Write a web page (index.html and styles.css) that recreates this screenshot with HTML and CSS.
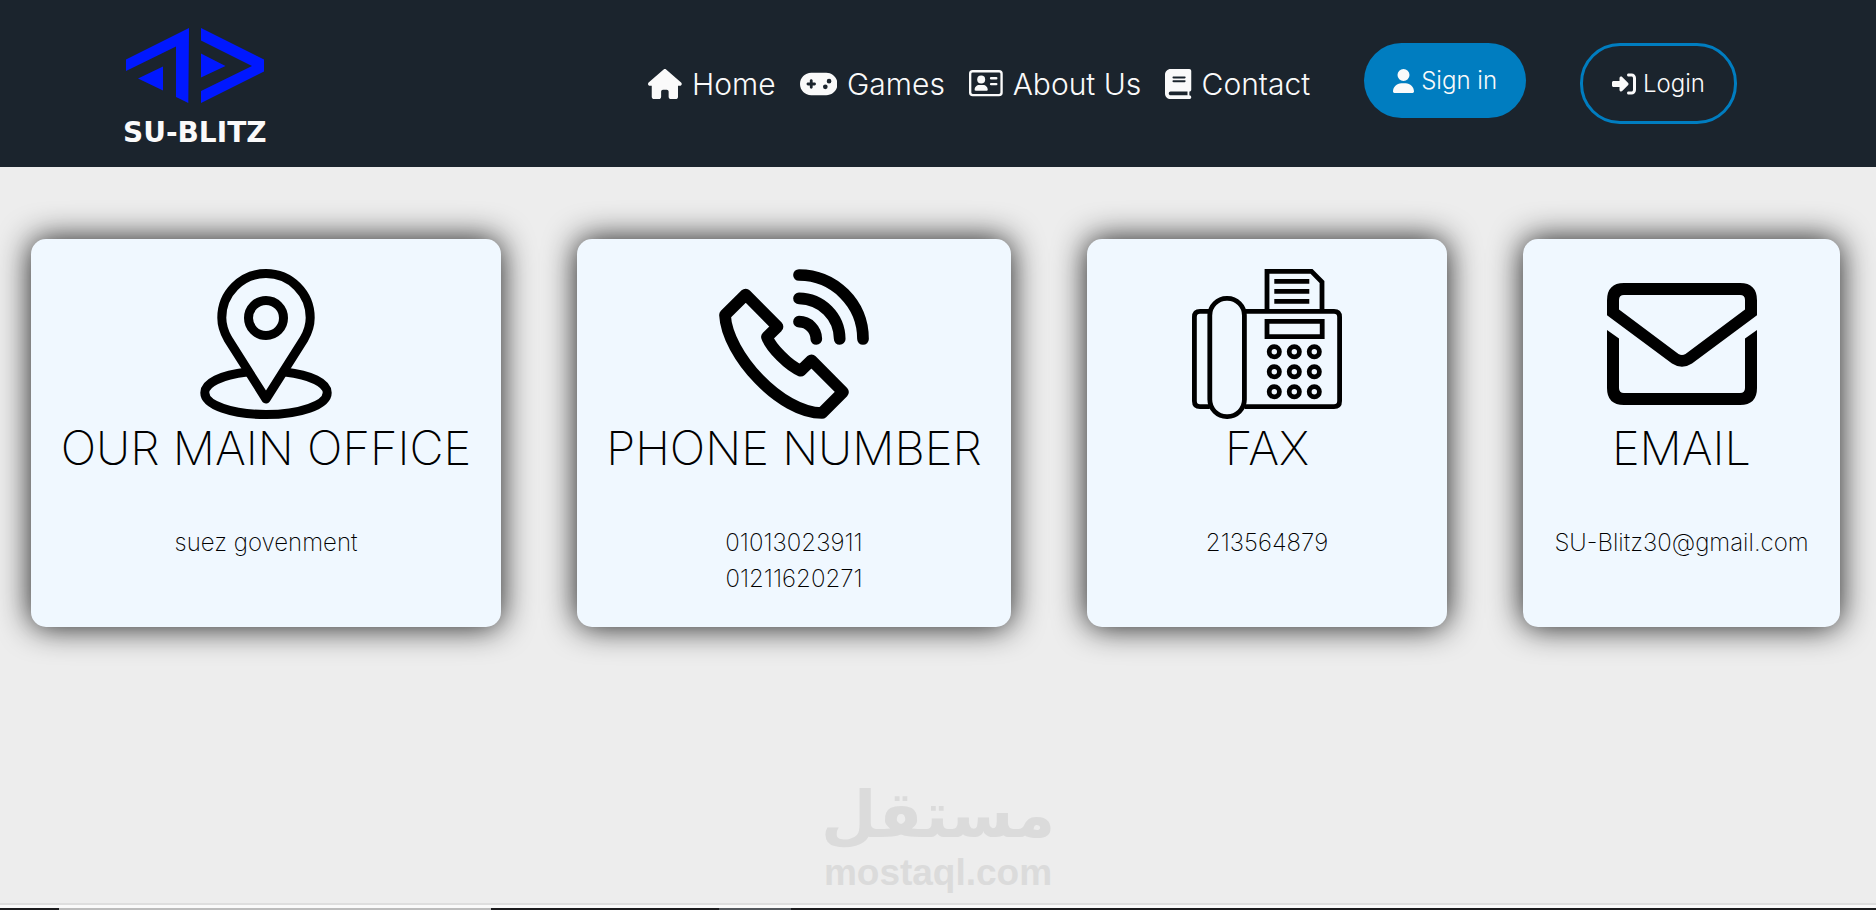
FILE: index.html
```
<!DOCTYPE html>
<html lang="en">
<head>
<meta charset="utf-8">
<meta name="viewport" content="width=device-width, initial-scale=1">
<title>SU-BLITZ | Contact</title>
<link rel="stylesheet" href="styles.css">
</head>
<body class="page">
<header class="header">
  <a class="logo" href="#">
    <svg class="logo-mark" viewBox="0 0 138 75" aria-hidden="true">
      <path d="M0 31.5 63 0 62.3 75 50 69V18.5L0 43zM12 50.5 37 38.5V62.5zM75 0 138 31.5V43.5L75 75V63L126 38 75 12.5zM75 25.5 99.5 38 75 49.5z"/>
    </svg>
    <span class="logo-text">SU-BLITZ</span>
  </a>
  <nav class="nav">
    <a class="nav-link" href="#">
      <svg class="nav-icon" viewBox="0 0 576 512" aria-hidden="true"><path d="M575.8 255.5c0 18-15 32.1-32 32.1h-32l.5 184.4c0 22.1-17.9 40-40 40H392c-22.1 0-40-17.9-40-40V384c0-17.7-14.3-32-32-32H256c-17.7 0-32 14.3-32 32v88c0 22.1-17.9 40-40 40H104c-22.1 0-40-17.9-40-40V287.6H32c-18 0-32-14-32-32.1 0-9 3-17 10-24L266.4 8c7-7 15-8 22-8s15 2 21 7L564.8 231.5c8 7 12 15 11 24z"/></svg>
      <span>Home</span>
    </a>
    <a class="nav-link" href="#">
      <svg class="nav-icon" viewBox="0 0 640 512" aria-hidden="true"><path fill-rule="evenodd" d="M192 64C86 64 0 150 0 256S86 448 192 448H448c106 0 192-86 192-192s-86-192-192-192H192zM496 168a40 40 0 1 1 0 80 40 40 0 1 1 0-80zM392 304a40 40 0 1 1 80 0 40 40 0 1 1 -80 0zM168 200c0-13.3 10.7-24 24-24s24 10.7 24 24v32h32c13.3 0 24 10.7 24 24s-10.7 24-24 24H216v32c0 13.3-10.7 24-24 24s-24-10.7-24-24V280H136c-13.3 0-24-10.7-24-24s10.7-24 24-24h32V200z"/></svg>
      <span>Games</span>
    </a>
    <a class="nav-link" href="#">
      <svg class="nav-icon" viewBox="0 0 576 512" aria-hidden="true"><rect x="20" y="38" width="536" height="408" rx="44" fill="none" stroke="currentColor" stroke-width="40"/><circle cx="208" cy="180" r="68"/><path d="M176 274h64c44 0 80 36 80 80 0 9-7 16-16 16H112c-9 0-16-7-16-16 0-44 36-80 80-80zM376 138h90q20 0 20 20t-20 20h-90q-20 0-20-20t20-20zM376 238h90q20 0 20 20t-20 20h-90q-20 0-20-20t20-20z"/></svg>
      <span>About Us</span>
    </a>
    <a class="nav-link" href="#">
      <svg class="nav-icon" viewBox="0 0 448 512" aria-hidden="true"><path fill-rule="evenodd" d="M96 0C43 0 0 43 0 96V416c0 53 43 96 96 96H416c17.7 0 32-14.3 32-32s-14.3-32-32-32V384c17.7 0 32-14.3 32-32V32c0-17.7-14.3-32-32-32H96zm0 384H384v64H96c-17.7 0-32-14.3-32-32s14.3-32 32-32zm32-240c0-8.8 7.2-16 16-16H336c8.8 0 16 7.2 16 16s-7.2 16-16 16H144c-8.8 0-16-7.2-16-16zm16 48H336c8.8 0 16 7.2 16 16s-7.2 16-16 16H144c-8.8 0-16-7.2-16-16s7.2-16 16-16z"/></svg>
      <span>Contact</span>
    </a>
  </nav>
  <div class="actions">
    <button class="btn btn-filled" type="button">
      <svg class="btn-icon" viewBox="0 0 448 512" aria-hidden="true"><path d="M224 256A128 128 0 1 0 224 0a128 128 0 1 0 0 256zm-45.7 48C79.8 304 0 383.8 0 482.3C0 498.7 13.3 512 29.7 512H418.3c16.4 0 29.7-13.3 29.7-29.7C448 383.8 368.2 304 269.7 304H178.3z"/></svg>
      <span>Sign in</span>
    </button>
    <button class="btn btn-outline" type="button">
      <svg class="btn-icon" viewBox="0 0 512 512" aria-hidden="true"><path d="M217.9 105.9L340.7 228.7c7.2 7.2 11.3 17.1 11.3 27.3s-4.1 20.1-11.3 27.3L217.9 406.1c-6.4 6.4-15 9.9-24 9.9c-18.7 0-33.9-15.2-33.9-33.9V320H32c-17.7 0-32-14.3-32-32V224c0-17.7 14.3-32 32-32H160V129.9c0-18.7 15.2-33.9 33.9-33.9c9 0 17.6 3.6 24 9.9zM352 416h64c17.7 0 32-14.3 32-32V128c0-17.7-14.3-32-32-32H352c-17.7 0-32-14.3-32-32s14.3-32 32-32h64c53 0 96 43 96 96V384c0 53-43 96-96 96H352c-17.7 0-32-14.3-32-32s14.3-32 32-32z"/></svg>
      <span>Login</span>
    </button>
  </div>
</header>

<main class="cards">
  <section class="card">
    <svg class="card-icon" viewBox="0 0 150 150" aria-hidden="true">
      <g fill="none" stroke="#000" stroke-width="9" stroke-linejoin="round">
        <path d="M75 130 37 70C33 63 30.8 56 30.8 48.7A44.2 44.2 0 0 1 119.2 48.7C119.2 56 117 63 113 70Z"/>
        <circle cx="75" cy="49" r="17.5"/>
        <path d="M56 103C30 106 13.8 114 13.8 123.7 13.8 136 41 145.5 75 145.5S136.2 136 136.2 123.7C136.2 114 120 106 94 103"/>
      </g>
    </svg>
    <h2 class="card-title">OUR MAIN OFFICE</h2>
    <p class="card-text">suez govenment</p>
  </section>
  <section class="card">
    <svg class="card-icon" viewBox="0 0 150 150" aria-hidden="true">
      <g fill="none" stroke="#000" stroke-width="11.7" stroke-linejoin="round" stroke-linecap="round">
        <path d="M80 6A64 64 0 0 1 144 70M80 29.3A41 41 0 0 1 120.7 70M80 52.7A17.4 17.4 0 0 1 97.3 70"/>
        <path d="M26.7 25.5 58.5 57.7 48 68C52 79 70 97 81.7 101.7L92.5 91.3 124 123 103 144C62 144 8 86 6 46Z"/>
      </g>
    </svg>
    <h2 class="card-title">PHONE NUMBER</h2>
    <p class="card-text">01013023911<br>01211620271</p>
  </section>
  <section class="card">
    <svg class="card-icon" viewBox="0 0 150 150" aria-hidden="true">
      <g fill="none" stroke="#000" stroke-width="4.8">
        <path d="M17.8 42.3H8Q2.4 42.3 2.4 48V132Q2.4 137.6 8 137.6H17.8M52.5 42.3H142Q147.6 42.3 147.6 48V132Q147.6 137.6 142 137.6H52.5"/>
        <rect x="17.8" y="29.4" width="34.6" height="118.2" rx="17"/>
        <path d="M75 42V2.4H119.5L130 13V42M82.3 12.3H117.3M82.3 22.3H117.3M82.3 32.3H117.3M75 52.4H130.2V67.6H75Z"/>
        <circle cx="82.3" cy="82.7" r="5.1"/><circle cx="102.3" cy="82.7" r="5.1"/><circle cx="122.3" cy="82.7" r="5.1"/>
        <circle cx="82.3" cy="102.7" r="5.1"/><circle cx="102.3" cy="102.7" r="5.1"/><circle cx="122.3" cy="102.7" r="5.1"/>
        <circle cx="82.3" cy="122.7" r="5.1"/><circle cx="102.3" cy="122.7" r="5.1"/><circle cx="122.3" cy="122.7" r="5.1"/>
      </g>
    </svg>
    <h2 class="card-title">FAX</h2>
    <p class="card-text">213564879</p>
  </section>
  <section class="card">
    <svg class="card-icon" viewBox="0 0 150 150" aria-hidden="true">
      <path fill-rule="evenodd" d="M0 46.3V31.5Q0 14 17 14H133Q150 14 150 31.5V46.3L85 94.5Q75 101 65 94.5ZM12 40.5V31Q12 26 17 26H133Q138 26 138 31V40.5L78.5 85Q75 87 71.5 85ZM0 61 12 69.5V119Q12 124 17 124H133Q138 124 138 119V69.5L150 61V119Q150 136 133 136H17Q0 136 0 119Z"/>
    </svg>
    <h2 class="card-title">EMAIL</h2>
    <p class="card-text">SU-Blitz30@gmail.com</p>
  </section>
</main>

<footer class="footer">
  <div class="watermark">
    <span class="watermark-ar" lang="ar" dir="rtl">مستقل</span>
    <span class="watermark-en">mostaql.com</span>
  </div>
  <div class="edge"></div>
  <div class="taskbar">
    <span class="task task-light"></span>
    <span class="task task-slate"></span>
  </div>
</footer>
</body>
</html>
```
FILE: styles.css
```
* {
  box-sizing: border-box;
}

.page {
  margin: 0;
  min-height: 100vh;
  display: flex;
  flex-direction: column;
  background: #ededed;
  color: #000;
  font-family: Inter, "Open Sans", sans-serif;
  font-weight: 300;
}

.header {
  display: flex;
  height: 167px;
  padding: 0 139px 0 123px;
  background: #1b242d;
  color: #fafafa;
}

.logo {
  display: flex;
  flex-direction: column;
  align-items: center;
  padding-top: 28px;
  color: #fafafa;
  text-decoration: none;
}

.logo-mark {
  width: 138px;
  height: 75px;
  fill: #0018ff;
}

.logo-text {
  margin-top: 14px;
  font-family: "DejaVu Sans", sans-serif;
  font-size: 28px;
  font-weight: 700;
  line-height: 32px;
}

.nav {
  display: flex;
  align-items: center;
  gap: 24px;
  margin-left: auto;
}

.nav-link {
  display: flex;
  align-items: center;
  gap: 10px;
  color: inherit;
  font-size: 30px;
  line-height: 36px;
  text-decoration: none;
}

.nav-icon {
  height: 30px;
  fill: currentColor;
}

.actions {
  display: flex;
  align-items: flex-start;
  gap: 54px;
  margin-left: 54px;
  padding-top: 43px;
}

.btn {
  display: flex;
  align-items: center;
  gap: 7px;
  padding: 22px 29px;
  border: 0;
  border-radius: 40px;
  background: none;
  color: inherit;
  font: inherit;
  font-size: 24px;
  line-height: 31px;
}

.btn-filled {
  background: #007dc0;
}

.btn-outline {
  border: 3px solid #007dc0;
}

.btn-icon {
  height: 24px;
  fill: currentColor;
}

.cards {
  display: grid;
  grid-template-columns: 470fr 434fr 360fr 317fr;
  gap: 76px;
  padding: 72px 36px 0 31px;
}

.card {
  display: flex;
  flex-direction: column;
  align-items: center;
  padding: 30px 0;
  border-radius: 15px;
  background: #f0f8ff;
  box-shadow: 0 0 32px rgba(0, 0, 0, 0.9);
  text-align: center;
}

.card-icon {
  width: 150px;
  height: 150px;
}

.card-title {
  margin: 0 0 48px;
  font-size: 47px;
  font-weight: 200;
  line-height: 58px;
  white-space: nowrap;
}

.card-text {
  margin: 0;
  font-size: 24px;
  font-weight: 200;
  line-height: 36px;
}

.footer {
  display: flex;
  flex-direction: column;
  margin-top: auto;
}

.watermark {
  display: flex;
  flex-direction: column;
  align-items: center;
  color: #dbdbdb;
  font-family: "Liberation Sans", sans-serif;
  font-weight: 700;
}

.watermark-ar {
  font-family: "DejaVu Sans", sans-serif;
  font-size: 64px;
  line-height: 76px;
}

.watermark-en {
  margin-bottom: 10px;
  font-size: 37px;
  line-height: 40px;
}

.edge {
  height: 5px;
  border-top: 2px solid #dedede;
  background: #fafafa;
}

.taskbar {
  display: flex;
  gap: 12.5%;
  height: 2px;
  padding-left: 59px;
  background: #1c1c1e;
}

.task-light {
  width: 23.8%;
  background: #bcbcbc;
}

.task-slate {
  width: 4%;
  background: #55595e;
}
```
